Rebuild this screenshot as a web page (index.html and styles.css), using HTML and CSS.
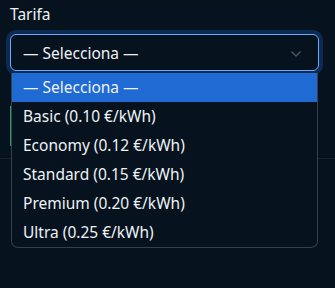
FILE: index.html
```html
<!DOCTYPE html>
<html>
<head>
	<meta charset="utf-8">
	<title>Tarifa</title>
	<link rel="stylesheet" href="styles.css">
</head>
<body>
	<div class="field">
		<label class="label">Tarifa</label>
		<div class="select-wrap">
			<div class="select">
				<span>— Selecciona —</span>
				<svg class="chevron" width="12" height="8" viewBox="0 0 12 8"><path d="M1.5 1.5 L6 6 L10.5 1.5" fill="none" stroke="#4f5862" stroke-width="1.3"/></svg>
			</div>
			<ul class="menu">
				<li class="active">— Selecciona —</li>
				<li>Basic (0.10 €/kWh)</li>
				<li>Economy (0.12 €/kWh)</li>
				<li>Standard (0.15 €/kWh)</li>
				<li>Premium (0.20 €/kWh)</li>
				<li>Ultra (0.25 €/kWh)</li>
			</ul>
		</div>
		<div class="stat"></div>
		<div class="divider"></div>
	</div>
</body>
</html>
```

FILE: styles.css
```css
*{
	margin: 0;
	padding: 0;
	box-sizing: border-box;
}
body{
	min-height: 288px;
	background: #06121e;
	font-family: "Noto Sans", "Open Sans", sans-serif;
	font-size: 15.5px;
	color: #eef2f6;
}
.field{
	padding-top: 4px;
}
.label{
	display: block;
	margin-left: 10px;
	line-height: 21px;
	margin-bottom: 9px;
}
.select-wrap{
	position: relative;
	margin: 0 16px 0 10px;
}
.select{
	display: flex;
	align-items: center;
	justify-content: space-between;
	height: 37px;
	padding: 0 16px 0 12px;
	border: 1px solid #6ea8fe;
	border-radius: 6px;
	background: #06121e;
	box-shadow: 0 0 0 4px #0c2b52;
}
.chevron{
	margin-top: 2px;
}
.menu{
	position: absolute;
	top: 39px;
	left: 1px;
	right: 1px;
	list-style: none;
	background: #06121e;
	border: 1px solid #353e49;
	border-top: none;
	border-radius: 0 0 7px 7px;
	overflow: hidden;
	z-index: 2;
}
.menu li{
	height: 29px;
	line-height: 29px;
	padding-left: 11px;
}
.menu .active{
	background: #1f6ad3;
}
.stat{
	margin: 35px 16px 0 10px;
	height: 40px;
	border-left: 1px solid #22a06b;
}
.divider{
	margin-top: 12px;
	height: 1px;
	background: #16212c;
}
```
